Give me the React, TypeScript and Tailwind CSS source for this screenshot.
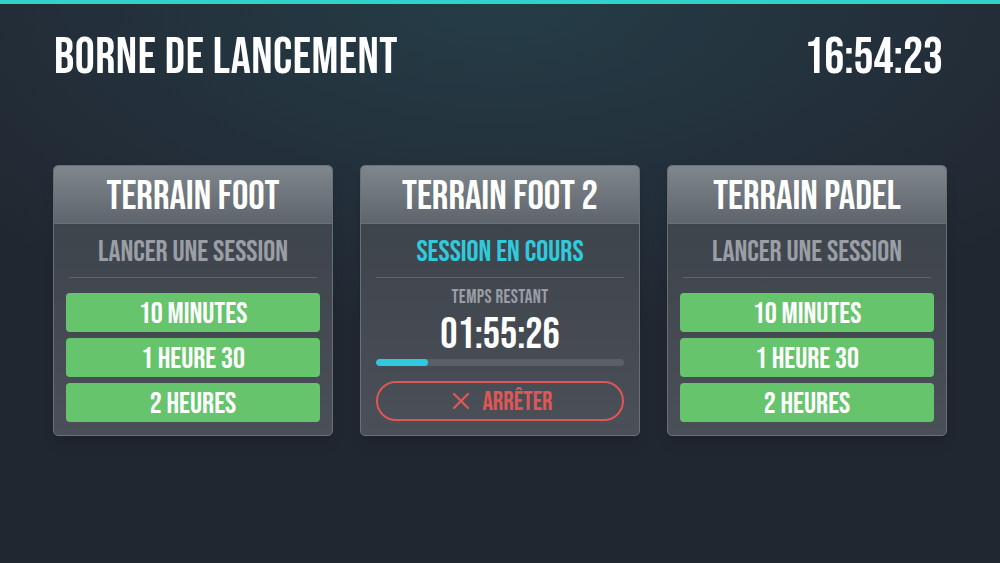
import { X } from 'lucide-react';

const font = "font-['Bebas_Neue','Liberation_Sans_Narrow','DejaVu_Sans_Condensed',sans-serif]";

interface TerrainProps {
  name: string;
}

function Header({ name }: TerrainProps) {
  return (
    <div className="h-[58px] flex items-center justify-center bg-gradient-to-b from-[#7f868c] to-[#5e656c] border-b border-[#6b7178]">
      <h2 className="text-[41px] leading-none text-white pt-[3px]">{name}</h2>
    </div>
  );
}

function LaunchCard({ name }: TerrainProps) {
  const options = ['10 MINUTES', '1 HEURE 30', '2 HEURES'];
  return (
    <div className="w-[280px] rounded-[5px] border border-[#6a7078] overflow-hidden bg-gradient-to-b from-[#3b4149] to-[#4a4f58] shadow-lg">
      <Header name={name} />
      <div className="px-3 pb-[13px]">
        <div className="h-[54px] flex items-center justify-center border-b border-[#5f656d] mx-[3px]">
          <span className="text-[30px] leading-none text-[#9a9ea5] pt-[3px]">LANCER UNE SESSION</span>
        </div>
        <div className="flex flex-col gap-[6px] pt-[15px]">
          {options.map((opt) => (
            <button
              key={opt}
              className="h-[39px] rounded-[4px] bg-[#66c46d] text-white text-[30px] leading-none flex items-center justify-center pt-[3px]"
            >
              {opt}
            </button>
          ))}
        </div>
      </div>
    </div>
  );
}

function RunningCard({ name }: TerrainProps) {
  const progress = 21;
  return (
    <div className="w-[280px] rounded-[5px] border border-[#6a7078] overflow-hidden bg-gradient-to-b from-[#3b4149] to-[#4a4f58] shadow-lg">
      <Header name={name} />
      <div className="px-[15px] pb-[13px]">
        <div className="h-[54px] flex items-center justify-center border-b border-[#5f656d]">
          <span className="text-[30px] leading-none text-[#2fcadb] pt-[3px]">SESSION EN COURS</span>
        </div>
        <div className="flex flex-col items-center pt-[10px]">
          <span className="text-[19px] leading-none text-[#9a9ea5] tracking-[0.02em]">TEMPS RESTANT</span>
          <span className="text-[43px] leading-none text-white mt-[7px]">01:55:26</span>
        </div>
        <div className="mt-[2px] h-[7px] rounded-full bg-[#5a5f68] overflow-hidden">
          <div className="h-full rounded-full bg-[#2fcadb]" style={{ width: `${progress}%` }} />
        </div>
        <button className="mt-[15px] w-full h-[40px] rounded-full border-2 border-[#e05656] flex items-center justify-center gap-[7px] text-[#e05656]">
          <X className="w-[28px] h-[28px]" strokeWidth={2} />
          <span className="text-[26px] leading-none pt-[3px]">ARRÊTER</span>
        </button>
      </div>
    </div>
  );
}

export default function App() {
  return (
    <div
      className={`${font} w-[1000px] h-[563px] overflow-hidden flex flex-col bg-[#212731] bg-[radial-gradient(ellipse_70%_60%_at_50%_0%,#253d47_0%,#232f3a_60%,#212731_100%)]`}
    >
      <div className="h-[4px] bg-[#31d1cc]" />
      <div className="flex items-center justify-between pl-[54px] pr-[57px] pt-[29px]">
        <h1 className="text-[50px] leading-none text-white tracking-[0.01em]">BORNE DE LANCEMENT</h1>
        <span className="text-[50px] leading-none text-white">16:54:23</span>
      </div>
      <div className="flex justify-center gap-[27px] mt-[82px]">
        <LaunchCard name="TERRAIN FOOT" />
        <RunningCard name="TERRAIN FOOT 2" />
        <LaunchCard name="TERRAIN PADEL" />
      </div>
    </div>
  );
}
